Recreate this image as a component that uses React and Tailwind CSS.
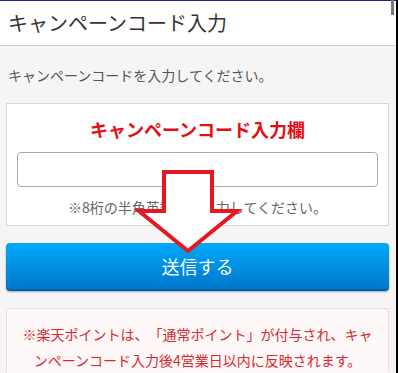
const font = { fontFamily: '"Noto Sans CJK JP", "Noto Sans", sans-serif' };

export default function App() {
  return (
    <div className="flex h-[373px] w-[398px] overflow-hidden bg-[#f5f5f5] [text-spacing-trim:space-all]" style={font}>
      <div className="relative w-[396px]">
        {/* top line + header */}
        <div className="h-px bg-[#1c2580]" />
        <div className="flex h-[45px] items-center border-b border-[#cfcfcf] bg-white pl-[8px] text-[20px] leading-none text-[#333]">
          キャンペーンコード入力
        </div>

        <div className="pl-[6px] pr-[7px]">
          <p className="pt-[19px] pl-[2px] text-[14px] leading-5 text-[#555]">
            キャンペーンコードを入力してください。
          </p>

          {/* input card */}
          <div className="mt-[18px] border border-[#d6d6d6] bg-white px-[10px] pt-[13px] pb-[8px]">
            <h2 className="text-center text-[18px] font-bold leading-6 text-[#e60d16]">
              キャンペーンコード入力欄
            </h2>
            <input
              type="text"
              className="mt-[11px] block h-[35px] w-full rounded-[4px] border border-[#a9a9a9] bg-white"
            />
            <p className="mt-[10px] text-center text-[14px] leading-5 text-[#666]">
              ※8桁の半角英数字を入力してください。
            </p>
          </div>

          {/* submit */}
          <button className="mt-[17px] flex h-[48px] w-full items-center justify-center rounded-[4px] border-b-2 border-[#0061a8] bg-gradient-to-b from-[#02a9fb] to-[#0077cb] text-[18px] text-white shadow-[0_1px_2px_rgba(0,0,0,0.35)]">
            送信する
          </button>

          {/* notice */}
          <div className="mt-[17px] rounded-[4px] border border-dotted border-[#f2b9b9] bg-[#fdf7f7] px-[12px] pt-[12px] pb-[12px] text-center text-[14px] leading-[26px] text-[#d52a30]">
            ※楽天ポイントは、「通常ポイント」が付与され、キャ
            <br />
            ンペーンコード入力後4営業日以内に反映されます。
          </div>
        </div>

        {/* red arrow overlay */}
        <svg className="pointer-events-none absolute left-0 top-0" width="396" height="373">
          <polygon
            points="164,172 212,172 212,211 237,211 188,251 139,211 164,211"
            fill="white"
            stroke="#e8161f"
            strokeWidth="4"
            strokeLinejoin="miter"
          />
        </svg>

        {/* scrollbar thumb */}
        <div className="absolute left-[391px] top-0 h-[15px] w-[3px] bg-[#7a7a7a]" />
      </div>
      <div className="w-[2px] bg-black" />
    </div>
  );
}
